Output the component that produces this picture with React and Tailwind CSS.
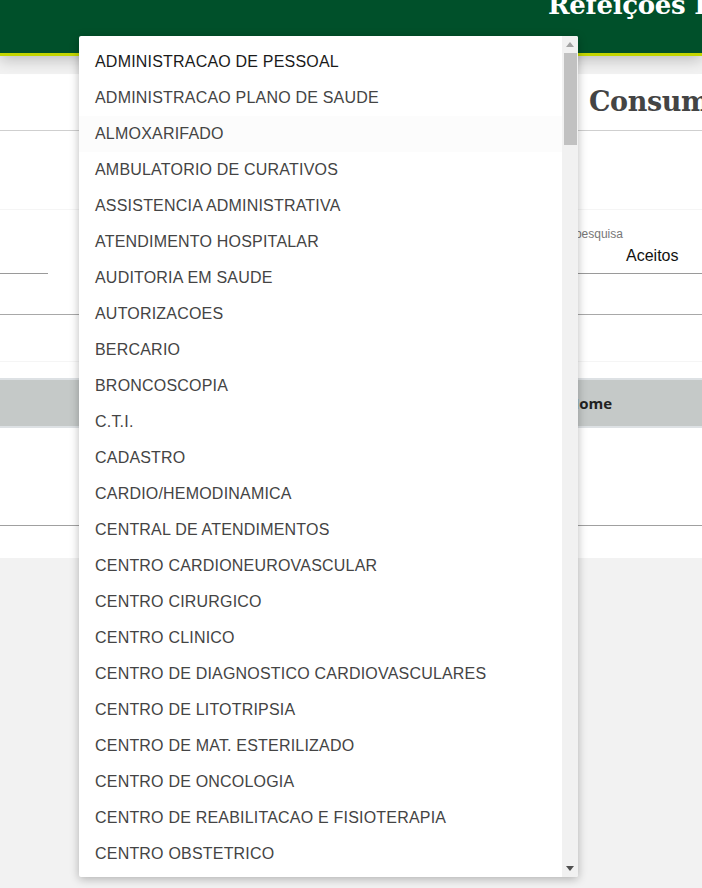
import React from "react";

const items = [
  "ADMINISTRACAO DE PESSOAL",
  "ADMINISTRACAO PLANO DE SAUDE",
  "ALMOXARIFADO",
  "AMBULATORIO DE CURATIVOS",
  "ASSISTENCIA ADMINISTRATIVA",
  "ATENDIMENTO HOSPITALAR",
  "AUDITORIA EM SAUDE",
  "AUTORIZACOES",
  "BERCARIO",
  "BRONCOSCOPIA",
  "C.T.I.",
  "CADASTRO",
  "CARDIO/HEMODINAMICA",
  "CENTRAL DE ATENDIMENTOS",
  "CENTRO CARDIONEUROVASCULAR",
  "CENTRO CIRURGICO",
  "CENTRO CLINICO",
  "CENTRO DE DIAGNOSTICO CARDIOVASCULARES",
  "CENTRO DE LITOTRIPSIA",
  "CENTRO DE MAT. ESTERILIZADO",
  "CENTRO DE ONCOLOGIA",
  "CENTRO DE REABILITACAO E FISIOTERAPIA",
  "CENTRO OBSTETRICO",
  "CENTRO DE IMAGEM",
];

export default function App() {
  return (
    <div className="relative min-h-[888px] bg-[#f2f2f2] overflow-hidden font-['Liberation_Sans',Arial,sans-serif]">
      {/* Header */}
      <div className="relative z-10 h-[56px] bg-[#00502a] border-b-[3px] border-[#c3d500] shadow-[0_4px_14px_rgba(0,0,0,0.22)] overflow-hidden">
        <div className="pl-[548px] -mt-[11px] whitespace-nowrap text-white text-[26px] font-bold leading-[32px] tracking-[-0.3px] font-['DejaVu_Serif',serif]">
          Refeições Realizadas
        </div>
      </div>

      {/* Card */}
      <div className="mt-[18px] bg-white h-[484px]">
        <div className="h-[57px] border-b border-[#cfcfcf] overflow-hidden whitespace-nowrap">
          <div className="pl-[589px] pt-[12px] text-[27px] font-bold text-[#444] leading-[32px] tracking-[-0.4px] font-['DejaVu_Serif',serif]">
            Consumo de Refeições
          </div>
        </div>
        <div className="h-[79px] border-b border-[#f5f5f5]" />
        <div className="h-[105px] border-b border-[#a8a8a8] flex">
          <div className="w-[48px] h-[64px] border-b border-[#9a9a9a]" />
          <div className="ml-[484px] flex-1 h-[64px] border-b border-[#9a9a9a] flex flex-col">
            <div className="pt-[18px] text-[12px] leading-[13px] text-[#777] whitespace-nowrap">
              Tipo de pesquisa
            </div>
            <div className="pl-[94px] pt-[5px] text-[16px] leading-[20px] text-[#111]">Aceitos</div>
          </div>
        </div>
        <div className="h-[47px] border-b border-[#f5f5f5]" />
        <div className="mt-[16px] h-[50px] bg-[#c5c9c8] border-y-2 border-[#dde1e4] flex items-center">
          <div className="pl-[567px] text-[15px] font-bold text-[#222] font-['Open_Sans',sans-serif]">
            Nome
          </div>
        </div>
        <div className="h-[98px] border-b border-[#a0a0a0]" />
      </div>

      {/* Dropdown */}
      <div className="absolute z-20 left-[79px] top-[36px] w-[499px] h-[841px] bg-white rounded-[2px] shadow-[0_2px_10px_rgba(0,0,0,0.28)] overflow-hidden flex">
        <div className="flex-1 pt-[8px] overflow-hidden">
          {items.map((it, i) => (
            <div
              key={it}
              className={
                "h-[36px] pl-[16px] flex items-center text-[16px] tracking-[0.2px] whitespace-nowrap " +
                (i === 0 ? "text-[#1a1a1a]" : "text-[#444]") +
                (i === 2 ? " bg-[#fcfcfc]" : "")
              }
            >
              {it}
            </div>
          ))}
        </div>
        <div className="w-[16px] bg-[#f1f1f1] flex flex-col items-center">
          <div className="h-[17px] flex items-center justify-center">
            <svg width="8" height="5" viewBox="0 0 8 5">
              <polygon points="4,0 8,5 0,5" fill="#a3a3a3" />
            </svg>
          </div>
          <div className="w-[13px] h-[92px] bg-[#c1c1c1]" />
          <div className="flex-1" />
          <div className="h-[17px] flex items-center justify-center">
            <svg width="8" height="5" viewBox="0 0 8 5">
              <polygon points="0,0 8,0 4,5" fill="#505050" />
            </svg>
          </div>
        </div>
      </div>
    </div>
  );
}
